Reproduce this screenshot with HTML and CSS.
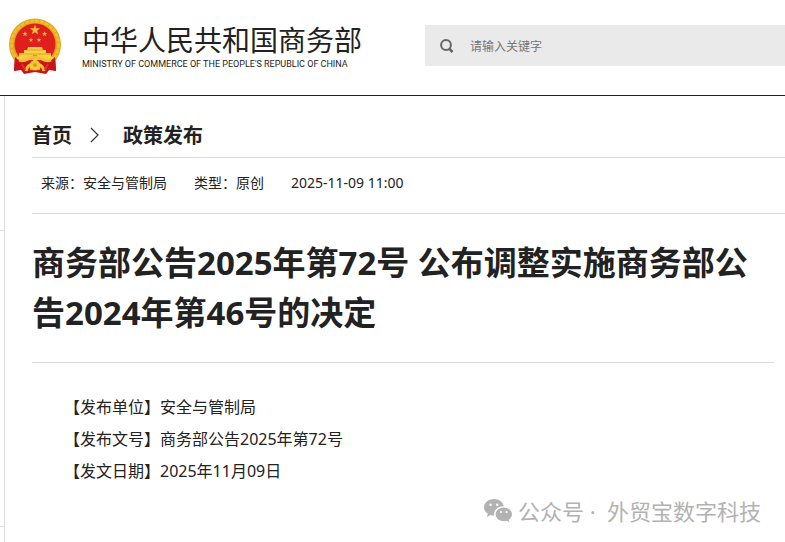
FILE: index.html
```html
<!DOCTYPE html>
<html lang="zh-CN">
<head>
    <meta charset="utf-8">
    <title>商务部公告2025年第72号</title>
    <link rel="stylesheet" href="styles.css">
</head>
<body>
    <header class="header">
        <a class="logo" href="#">
            <svg class="emblem" viewBox="0 0 54 58" aria-hidden="true">
                <defs>
                    <polygon id="star" points="0,-10 2.4,-3.2 9.5,-3.1 3.8,1.2 5.9,8.1 0,4 -5.9,8.1 -3.8,1.2 -9.5,-3.1 -2.4,-3.2"/>
                </defs>
                <path d="M7 38 6 53l7-1 3 4 11-2 11 2 3-4 7 1-1-15z" fill="#c9141b"/>
                <circle cx="27" cy="26.500" r="26" fill="#e2a51d"/>
                <circle cx="27" cy="26.500" r="23.500" fill="none" stroke="#efbd2e" stroke-width="3" stroke-dasharray="4 1"/>
                <circle cx="27" cy="26" r="20.500" fill="#df1f1d"/>
                <g fill="#f3bd35">
                    <use href="#star" transform="translate(27 12) scale(.54)"/>
                    <use href="#star" transform="translate(17 16) scale(.28)"/>
                    <use href="#star" transform="translate(36.500 16) scale(.28)"/>
                    <use href="#star" transform="translate(23 22) scale(.25)"/>
                    <use href="#star" transform="translate(31 22) scale(.25)"/>
                </g>
                <path d="M20 29h14l1 3h3v3h5v4h3v3H9v-3h2v-4h5v-3h3z" fill="#f8cf45"/>
                <path d="M19 32h16M11 36h32" stroke="#e6a021"/>
                <path d="M25 37h4v3h-4z" fill="#d9751c"/>
                <path d="M7 39c5 5 9 5 14 3l1 10-5 3-4-4-7 2zM47 39c-5 5-9 5-14 3l-1 10 5 3 4-4 7 2z" fill="#c9141b"/>
                <path d="M11 42c6 3 10-3 16-3s10 6 16 3M18 53c1-6 5-7 9-7s8 1 9 7" fill="none" stroke="#f1c131" stroke-width="3"/>
                <circle cx="27" cy="47" r="5" fill="#f5ca39"/>
                <circle cx="27" cy="47" r="2" fill="#d99b20"/>
                <path d="M14 46l3 6M40 46l-3 6" stroke="#ed2925" stroke-width="2"/>
            </svg>
            <span class="logo-text">
                <span class="logo-cn">中华人民共和国商务部</span>
                <span class="logo-en">MINISTRY OF COMMERCE OF THE PEOPLE'S REPUBLIC OF CHINA</span>
            </span>
        </a>
        <form class="search">
            <button class="search-btn" type="submit" aria-label="搜索">
                <svg viewBox="0 0 14 14" aria-hidden="true">
                    <circle cx="6" cy="6" r="4.900" fill="none" stroke="#666" stroke-width="2"/>
                    <path d="M9 9.500 12.500 13" stroke="#666" stroke-width="2.600"/>
                </svg>
            </button>
            <input class="search-input" type="text" placeholder="请输入关键字" aria-label="请输入关键字">
        </form>
    </header>

    <div class="page">
        <aside class="side">
            <div class="side-item"></div>
            <div class="side-item side-item-tall"></div>
        </aside>
        <main class="main">
            <nav class="crumbs">
                <a href="#">首页</a>
                <svg class="crumb-arrow" viewBox="0 0 10 16" aria-hidden="true">
                    <path d="M1 1l7 7-7 7" fill="none" stroke="#333" stroke-width="1.200"/>
                </svg>
                <a href="#">政策发布</a>
            </nav>
            <div class="meta">
                <span>来源：安全与管制局</span>
                <span>类型：原创</span>
                <span>2025-11-09 11:00</span>
            </div>
            <h1 class="title">商务部公告2025年第72号 公布调整实施商务部公告2024年第46号的决定</h1>
            <div class="content">
                <p>【发布单位】安全与管制局</p>
                <p>【发布文号】商务部公告2025年第72号</p>
                <p>【发文日期】2025年11月09日</p>
            </div>
        </main>
    </div>

    <div class="watermark">
        <svg viewBox="0 0 28 24" aria-hidden="true">
            <path d="M10 0C4.500 0 0 3.700 0 8.300c0 2.700 1.500 4.900 3.800 6.400L3 18l3.500-2c1.200.4 2.300.6 3.700.6C9.300 11 14 7 19.800 7.200 19 3 15 0 10 0z" fill="#b2b2b2"/>
            <path d="M28 15.300c0-3.800-3.700-6.900-8.200-6.900s-8.200 3.100-8.200 6.900 3.700 6.900 8.200 6.900c1 0 2-.2 2.900-.5l2.800 1.600-.8-2.600c2-1.200 3.300-3.200 3.300-5.400z" fill="#b2b2b2"/>
            <g fill="#fff">
                <circle cx="6.600" cy="5.800" r="1.200"/>
                <circle cx="13.300" cy="5.800" r="1.200"/>
                <circle cx="17" cy="13" r="1.100"/>
                <circle cx="22.600" cy="13" r="1.100"/>
            </g>
        </svg>
        <span>公众号 ·&nbsp; 外贸宝数字科技</span>
    </div>
</body>
</html>
```
FILE: styles.css
```css
* {
    box-sizing: border-box;
}
body {
    margin: 0;
    min-height: 100vh;
    display: flex;
    flex-direction: column;
    font-family: "Noto Sans", "Noto Sans CJK SC", sans-serif;
    color: #222;
    background-color: #fff;
}
a {
    color: inherit;
    text-decoration: none;
}
.header {
    display: flex;
    height: 96px;
    border-bottom: 1px solid #222;
}
.logo {
    flex: none;
    display: flex;
    width: 425px;
    padding: 18px 0 0 8px;
    gap: 20px;
}
.emblem {
    width: 54px;
    height: 58px;
}
.logo-text {
    display: flex;
    flex-direction: column;
    padding-top: 5px;
}
.logo-cn {
    font-family: "Noto Sans CJK SC", sans-serif;
    font-size: 28px;
    line-height: 32px;
    white-space: nowrap;
}
.logo-en {
    font-family: Roboto, Arial, sans-serif;
    font-size: 9px;
    line-height: 18px;
    white-space: nowrap;
}
.search {
    flex: 1;
    display: flex;
    height: 41px;
    margin-top: 25px;
    background-color: #eaeaea;
}
.search-btn {
    width: 45px;
    padding: 0 0 0 15px;
    border: none;
    background: none;
    text-align: left;
    cursor: pointer;
}
.search-btn svg {
    display: block;
    width: 14px;
    height: 14px;
}
.search-input {
    flex: 1;
    min-width: 0;
    padding: 0;
    border: none;
    outline: none;
    background: none;
    font-family: "Noto Sans CJK SC", sans-serif;
    font-size: 12px;
}
.search-input::placeholder {
    color: #757575;
}
.page {
    flex: 1;
    display: flex;
}
.side {
    flex: none;
    width: 5px;
    border-right: 1px solid #dcdcdc;
}
.side-item {
    height: 135px;
    border-bottom: 1px solid #dcdcdc;
}
.side-item-tall {
    height: 296px;
}
.main {
    flex: 1;
    min-width: 0;
    padding-left: 27px;
}
.crumbs {
    display: flex;
    align-items: center;
    height: 62px;
    padding-top: 16px;
    border-bottom: 1px solid #dcdcdc;
    font-size: 20px;
    font-weight: bold;
}
.crumb-arrow {
    width: 10px;
    height: 16px;
    margin: 0 23px 0 18px;
}
.meta {
    display: flex;
    gap: 27px;
    height: 56px;
    padding: 0 9px;
    border-bottom: 1px solid #dcdcdc;
    font-size: 14px;
    line-height: 50px;
}
.title {
    margin: 0 11px 0 0;
    padding: 24px 0;
    border-bottom: 1px solid #dcdcdc;
    font-size: 33px;
    line-height: 50px;
}
.content {
    padding: 28px 11px 0 0;
    font-size: 16px;
}
.content p {
    margin: 0;
    text-indent: 2em;
    line-height: 32px;
}
.watermark {
    position: absolute;
    right: 24px;
    bottom: 15px;
    display: flex;
    align-items: center;
    gap: 6px;
    font-size: 22px;
    line-height: 32px;
    color: #b2b2b2;
}
.watermark svg {
    width: 28px;
    height: 24px;
}
```
